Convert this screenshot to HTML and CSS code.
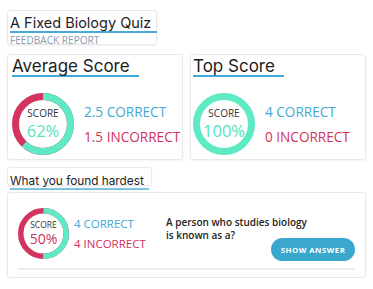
FILE: index.html
```html
<!DOCTYPE html>
<html lang="en">
<head>
<meta charset="utf-8">
<title>A Fixed Biology Quiz</title>
<link rel="stylesheet" href="styles.css">
</head>
<body>
<div class="page">
  <header class="card head-card">
    <h1 class="title-sm">A Fixed Biology Quiz</h1>
    <div class="subtitle">FEEDBACK REPORT</div>
  </header>

  <div class="stat-row">
    <section class="card stat-card">
      <h2 class="title-lg">Average Score</h2>
      <div class="score-row">
        <div class="ring ring-lg">
          <svg viewBox="0 0 62 62" width="62" height="62">
            <circle cx="31" cy="31" r="27.5" fill="none" stroke="#d2335f" stroke-width="7"/>
            <circle cx="31" cy="31" r="27.5" fill="none" stroke="#5eeac5" stroke-width="7" stroke-dasharray="107.1 200" transform="rotate(-90 31 31)"/>
          </svg>
          <div class="ring-label">
            <span class="ring-cap">SCORE</span>
            <span class="ring-val green">62%</span>
          </div>
        </div>
        <div class="counts">
          <div class="correct">2.5 CORRECT</div>
          <div class="incorrect">1.5 INCORRECT</div>
        </div>
      </div>
    </section>

    <section class="card stat-card stat-card-right">
      <h2 class="title-lg">Top Score</h2>
      <div class="score-row">
        <div class="ring ring-lg">
          <svg viewBox="0 0 62 62" width="62" height="62">
            <circle cx="31" cy="31" r="27.5" fill="none" stroke="#5eeac5" stroke-width="7"/>
          </svg>
          <div class="ring-label">
            <span class="ring-cap">SCORE</span>
            <span class="ring-val green">100%</span>
          </div>
        </div>
        <div class="counts">
          <div class="correct">4 CORRECT</div>
          <div class="incorrect">0 INCORRECT</div>
        </div>
      </div>
    </section>
  </div>

  <div class="card hard-card">
    <h3 class="title-xs">What you found hardest</h3>
  </div>

  <section class="card question-card">
    <div class="q-row">
      <div class="q-left">
        <div class="ring ring-sm">
          <svg viewBox="0 0 51 51" width="51" height="51">
            <circle cx="25.5" cy="25.5" r="22.75" fill="none" stroke="#d2335f" stroke-width="5.5"/>
            <circle cx="25.5" cy="25.5" r="22.75" fill="none" stroke="#5eeac5" stroke-width="5.5" stroke-dasharray="71.47 200" transform="rotate(-90 25.5 25.5)"/>
          </svg>
          <div class="ring-label">
            <span class="ring-cap small">SCORE</span>
            <span class="ring-val small red">50%</span>
          </div>
        </div>
        <div class="counts counts-sm">
          <div class="correct">4 CORRECT</div>
          <div class="incorrect">4 INCORRECT</div>
        </div>
      </div>
      <div class="q-right">
        <p class="question">A person who studies biology<br>is known as a?</p>
        <div class="btn-wrap"><button class="btn">SHOW ANSWER</button></div>
      </div>
    </div>
    <div class="divider"></div>
  </section>
</div>
</body>
</html>
```

FILE: styles.css
```css
html, body {
  margin: 0;
  padding: 0;
  background: #ffffff;
}
body {
  font-family: "Open Sans", "Liberation Sans", sans-serif;
  color: #222;
}
.page {
  padding: 10px 7px 0 7px;
  width: 359px;
}
.card {
  background: #fff;
  border: 1px solid #e9e9e9;
  border-radius: 3px;
  box-shadow: 0 1px 2px rgba(0,0,0,0.05);
  box-sizing: border-box;
}
.head-card {
  width: 150px;
  height: 35px;
  padding: 0 0 0 2px;
}
.title-sm {
  margin: 0;
  font-family: "Inter", "Open Sans", sans-serif;
  font-weight: 400;
  font-size: 14.5px;
  line-height: 17px;
  padding-top: 1px;
  padding-right: 6px;
  display: inline-block;
  border-bottom: 2px solid #4aaad6;
  color: #1d1d1d;
  white-space: nowrap;
}
.subtitle {
  font-size: 10.1px;
  color: #8a9bb2;
  line-height: 12px;
  margin-top: 1px;
  white-space: nowrap;
}
.stat-row {
  display: flex;
  gap: 7px;
  margin-top: 9px;
}
.stat-card {
  width: 176px;
  height: 106px;
  padding: 0 4px;
}
.stat-card-right {
  padding-left: 2px;
}
.title-lg {
  margin: 0;
  font-family: "Inter", "Open Sans", sans-serif;
  font-weight: 400;
  font-size: 17px;
  line-height: 17px;
  padding-top: 1px;
  padding-right: 9px;
  display: inline-block;
  border-bottom: 2px solid #3ea8d6;
  color: #1d1d1d;
  white-space: nowrap;
}
.score-row {
  display: flex;
  align-items: center;
  gap: 10px;
  margin-top: 16px;
}
.ring {
  display: grid;
  place-items: center;
  flex: none;
}
.ring > svg, .ring > .ring-label {
  grid-area: 1 / 1;
}
.ring-label {
  display: flex;
  flex-direction: column;
  align-items: center;
}
.ring-cap {
  font-size: 10px;
  color: #333;
  line-height: 13px;
}
.ring-val {
  font-size: 16.5px;
  line-height: 21px;
}
.ring-cap.small {
  font-size: 8.5px;
  line-height: 11px;
}
.ring-val.small {
  font-size: 14px;
  line-height: 18px;
}
.green { color: #55e2bc; }
.red { color: #cf2f5c; }
.counts {
  display: flex;
  flex-direction: column;
  gap: 6px;
  font-size: 13.6px;
  line-height: 19px;
  white-space: nowrap;
}
.correct { color: #40a9d4; }
.incorrect { color: #d0325e; }
.hard-card {
  width: 145px;
  height: 19px;
  margin-top: 7px;
  padding: 0 0 0 2px;
}
.title-xs {
  margin: 0;
  font-family: "Inter", "Open Sans", sans-serif;
  font-weight: 400;
  font-size: 11.8px;
  line-height: 14px;
  padding-top: 1px;
  padding-right: 5px;
  display: inline-block;
  border-bottom: 2px solid #7cc3e2;
  color: #1d1d1d;
  white-space: nowrap;
}
.question-card {
  margin-top: 6px;
  height: 86px;
  padding: 12px 10px 0 10px;
}
.q-row {
  display: flex;
}
.q-left {
  display: flex;
  align-items: center;
  gap: 5px;
  width: 148px;
  flex: none;
}
.counts-sm {
  font-size: 11.5px;
  line-height: 15px;
  gap: 5px;
}
.q-right {
  flex: 1;
  padding-top: 11px;
}
.question {
  margin: 0;
  font-weight: 600;
  font-size: 10px;
  line-height: 13px;
  color: #222;
  white-space: nowrap;
}
.btn-wrap {
  display: flex;
  justify-content: flex-end;
  margin-top: -4px;
}
.btn {
  background: #3aa7cd;
  color: #fff;
  border: none;
  border-radius: 12px;
  width: 84px;
  height: 23px;
  font-family: "Open Sans", sans-serif;
  font-weight: 700;
  font-size: 7.8px;
  letter-spacing: 0.5px;
  padding: 0;
}
.divider {
  height: 2px;
  background: #ececec;
  margin-top: 7px;
}
```
